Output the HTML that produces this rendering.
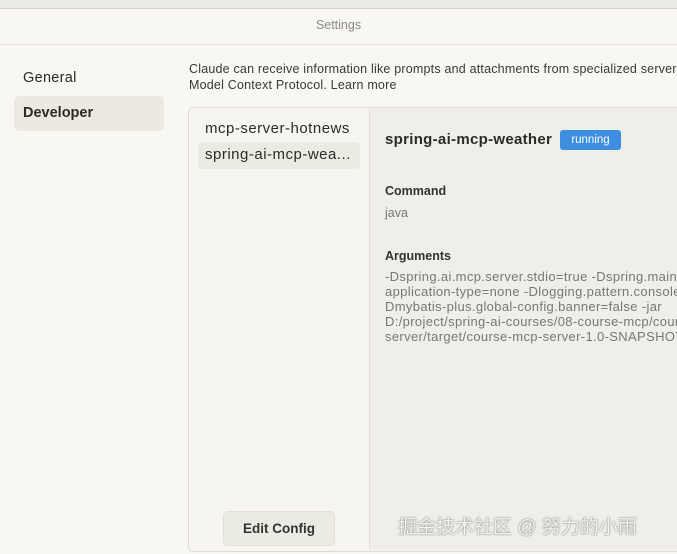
<!DOCTYPE html><html><head><style>
body{margin:0;width:677px;height:554px;background:#f8f7f2;font-family:"Liberation Sans","Noto Sans CJK SC",sans-serif;position:relative;overflow:hidden;color:#2b2a27}
.a{position:absolute;white-space:nowrap}
</style></head><body>
<div class="a" style="left:0;top:0;width:677px;height:8px;background:#ecebe6;border-bottom:1px solid #d6d4cc"></div>
<div class="a" style="left:0;top:18px;width:677px;text-align:center;font-size:12.5px;color:#8a8880">Settings</div>
<div class="a" style="left:0;top:44px;width:677px;height:1px;background:#e4e2da"></div>
<div class="a" style="left:23px;top:70px;font-size:14.5px;letter-spacing:0.3px">General</div>
<div class="a" style="left:14px;top:96px;width:150px;height:35px;background:#ebe9e1;border-radius:5px"></div>
<div class="a" style="left:23px;top:105px;font-size:14.5px;font-weight:bold">Developer</div>
<div class="a" style="left:189px;top:61px;width:488px;overflow:hidden;font-size:12.5px;line-height:16px;color:#3a3935;letter-spacing:0.2px">Claude can receive information like prompts and attachments from specialized servers using<br>Model Context Protocol. Learn more</div>
<div class="a" style="left:188px;top:107px;width:500px;height:443px;border:1px solid #dddbd3;border-radius:5px;background:#f6f5ef"></div>
<div class="a" style="left:369px;top:108px;width:310px;height:442px;background:#efeee8;border-left:1px solid #e2e0d8"></div>
<div class="a" style="left:205px;top:120px;font-size:15px;letter-spacing:0.5px">mcp-server-hotnews</div>
<div class="a" style="left:198px;top:142px;width:162px;height:27px;background:#ecebe3;border-radius:4px"></div>
<div class="a" style="left:205px;top:146px;font-size:15px;letter-spacing:0.5px">spring-ai-mcp-wea...</div>
<div class="a" style="left:385px;top:131px;font-size:15px;font-weight:bold;letter-spacing:0.3px">spring-ai-mcp-weather</div>
<div class="a" style="left:560px;top:130px;width:61px;height:20px;background:#3d8ee0;border-radius:3px;color:#fff;font-size:11.5px;text-align:center;line-height:20px">running</div>
<div class="a" style="left:385px;top:184px;font-size:12.5px;font-weight:bold;color:#333">Command</div>
<div class="a" style="left:385px;top:206px;font-size:12.5px;color:#777">java</div>
<div class="a" style="left:385px;top:249px;font-size:12.5px;font-weight:bold;color:#333">Arguments</div>
<div class="a" style="left:385px;top:269px;width:292px;overflow:hidden;font-size:13px;line-height:15px;color:#777;letter-spacing:0.35px">-Dspring.ai.mcp.server.stdio=true -Dspring.main.web-<br>application-type=none -Dlogging.pattern.console= -<br>Dmybatis-plus.global-config.banner=false -jar<br>D:/project/spring-ai-courses/08-course-mcp/course-mcp-<br>server/target/course-mcp-server-1.0-SNAPSHOT.jar</div>
<div class="a" style="left:223px;top:511px;width:110px;height:33px;background:#ebeae3;border:1px solid #e0ded6;border-radius:5px;font-size:13.5px;font-weight:bold;text-align:center;line-height:33px;color:#333">Edit Config</div>
<div class="a" style="left:398px;top:512px;font-size:19px;color:#f4f4f2;text-shadow:0 0 1px #777,0 0 2px #999">掘金技术社区 @ 努力的小雨</div>
</body></html>
